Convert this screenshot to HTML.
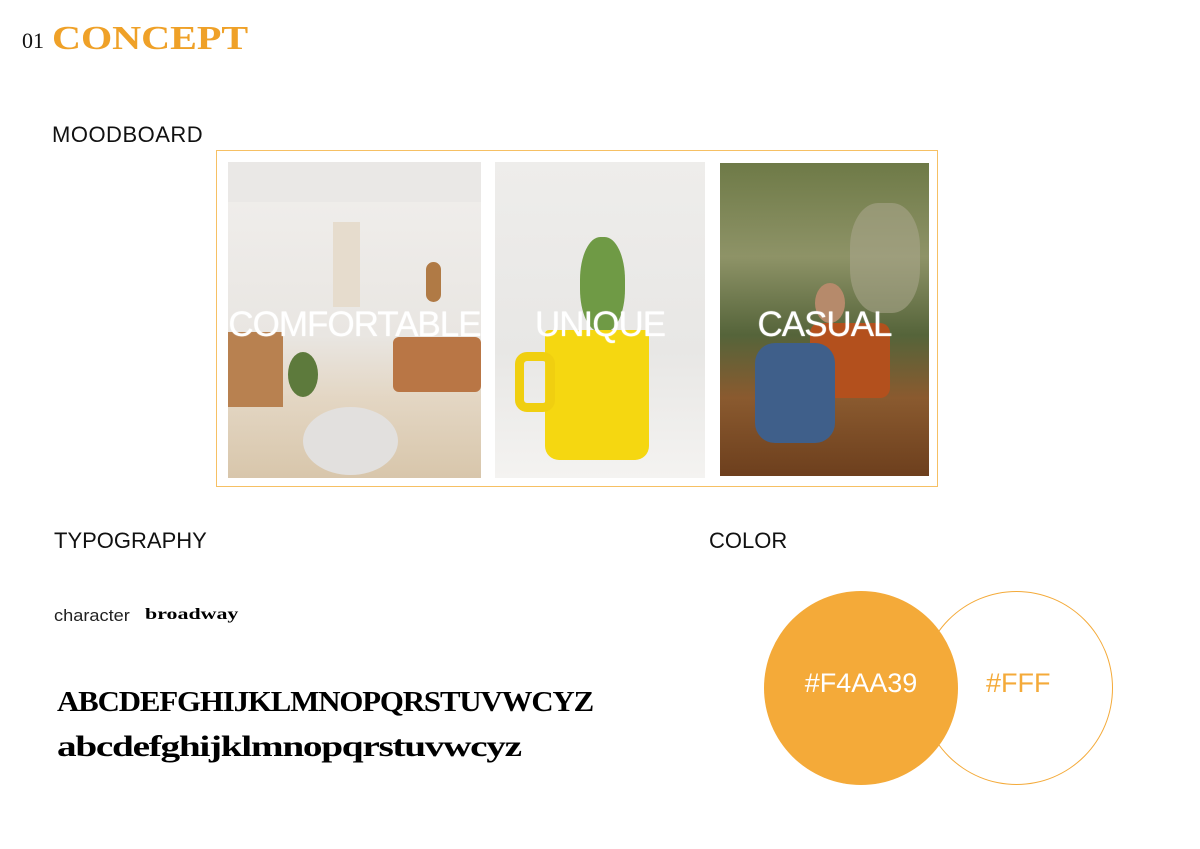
<!DOCTYPE html>
<html><head><meta charset="utf-8"><style>
*{margin:0;padding:0;box-sizing:border-box}
body{width:1200px;height:849px;background:#fff;position:relative;overflow:hidden;font-family:"Liberation Sans",sans-serif}
.a{position:absolute}
.lbl{position:absolute;color:#fff;font-size:35px;letter-spacing:-1px;top:305px;white-space:nowrap;text-align:center;transform:scaleX(1.0);text-shadow:0 0 1px #fff}
</style></head><body>
<div class="a" style="left:22px;top:28px;font-family:'Liberation Serif',serif;font-size:22px;color:#111">01</div>
<div class="a" style="left:52px;top:20px;font-family:'Liberation Serif',serif;font-size:34px;font-weight:bold;color:#EFA128;transform:scaleX(1.18);transform-origin:left">CONCEPT</div>
<div class="a" style="left:52px;top:122px;font-size:22px;color:#111;letter-spacing:.5px">MOODBOARD</div>
<div class="a" style="left:216px;top:150px;width:722px;height:337px;border:1px solid #F6C064"></div>
<div class="a" style="left:228px;top:162px;width:253px;height:316px;background:linear-gradient(#f1efed 0%,#e9e6e2 55%,#e3d6c3 75%,#d8c6ab 100%);overflow:hidden">
 <div class="a" style="left:0;top:0;width:253px;height:40px;background:#eae8e6"></div>
 <div class="a" style="left:105px;top:60px;width:27px;height:85px;background:#e6dccd"></div>
 <div class="a" style="left:198px;top:100px;width:15px;height:40px;border-radius:8px;background:#b07a45"></div>
 <div class="a" style="left:0;top:170px;width:55px;height:75px;background:#b88150"></div>
 <div class="a" style="left:165px;top:175px;width:88px;height:55px;background:#b97645;border-radius:6px"></div>
 <div class="a" style="left:60px;top:190px;width:30px;height:45px;background:#5d7a3c;border-radius:50%"></div>
 <div class="a" style="left:75px;top:245px;width:95px;height:68px;border-radius:50%;background:#e2e0de"></div>
</div>
<div class="lbl" style="left:228px;width:253px">COMFORTABLE</div>
<div class="a" style="left:495px;top:162px;width:210px;height:316px;background:linear-gradient(#eeedeb 0%,#e8e7e5 60%,#f4f3f1 100%);overflow:hidden">
 <div class="a" style="left:85px;top:75px;width:45px;height:95px;background:#6f9a45;border-radius:45%"></div>
 <div class="a" style="left:50px;top:168px;width:104px;height:130px;background:#f5d711;border-radius:4px 4px 14px 14px"></div>
 <div class="a" style="left:20px;top:190px;width:40px;height:60px;border:9px solid #f0cf10;border-radius:12px"></div>
</div>
<div class="lbl" style="left:495px;width:210px">UNIQUE</div>
<div class="a" style="left:720px;top:163px;width:209px;height:313px;background:linear-gradient(#6e7a47 0%,#8e9367 30%,#55643a 55%,#8a5a2f 75%,#6d3f1d 100%);overflow:hidden">
 <div class="a" style="left:130px;top:40px;width:70px;height:110px;background:#a9a58a;border-radius:40%;opacity:.6"></div>
 <div class="a" style="left:95px;top:120px;width:30px;height:40px;background:#b68a6b;border-radius:50%"></div>
 <div class="a" style="left:90px;top:160px;width:80px;height:75px;background:#b3501d;border-radius:10px"></div>
 <div class="a" style="left:35px;top:180px;width:80px;height:100px;background:#3f5f8a;border-radius:20px"></div>
</div>
<div class="lbl" style="left:720px;width:209px">CASUAL</div>

<div class="a" style="left:54px;top:528px;font-size:22px;color:#111">TYPOGRAPHY</div>
<div class="a" style="left:709px;top:528px;font-size:22px;color:#111">COLOR</div>
<div class="a" style="left:54px;top:606px;font-size:17px;color:#222;transform:scaleX(1.07);transform-origin:left">character</div>
<div class="a" style="left:145px;top:606px;font-family:'Liberation Serif',serif;font-weight:bold;font-size:16px;color:#000;transform:scaleX(1.37);transform-origin:left">broadway</div>
<div class="a" style="left:57px;top:687px;font-family:'Liberation Serif',serif;font-weight:bold;font-size:28px;color:#000;white-space:nowrap;transform:scaleX(1.10);transform-origin:left;letter-spacing:-1px">ABCDEFGHIJKLMNOPQRSTUVWCYZ</div>
<div class="a" style="left:57px;top:730px;font-family:'Liberation Serif',serif;font-weight:bold;font-size:30px;color:#000;white-space:nowrap;transform:scaleX(1.31);transform-origin:left;letter-spacing:-1px">abcdefghijklmnopqrstuvwcyz</div>

<div class="a" style="left:920px;top:591px;width:193px;height:194px;border-radius:50%;border:1px solid #F4AA39;background:#fff"></div>
<div class="a" style="left:764px;top:591px;width:194px;height:194px;border-radius:50%;background:#F4AA39"></div>
<div class="a" style="left:764px;top:668px;width:194px;text-align:center;color:#fff;font-size:27px">#F4AA39</div>
<div class="a" style="left:986px;top:668px;color:#F4AA39;font-size:27px">#FFF</div>
</body></html>
